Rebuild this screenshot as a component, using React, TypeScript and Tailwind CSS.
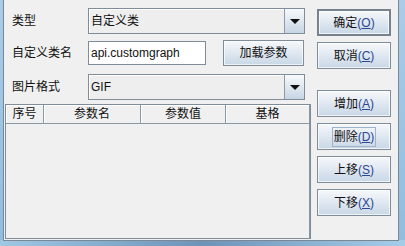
import React from "react";

const font = { fontFamily: '"Liberation Sans", "Noto Sans CJK SC", sans-serif' };

function Mn({ t, k }: { t: string; k: string }) {
  return (
    <span className="text-[#111]">
      {t}
      <span className="text-[#2a4792]">
        (<span className="underline underline-offset-1">{k}</span>)
      </span>
    </span>
  );
}

function Btn({ children, cls, focus }: { children: React.ReactNode; cls: string; focus?: boolean }) {
  return (
    <div
      className={`h-[27px] w-[74px] flex items-center justify-center border border-[#7f8c99] bg-linear-to-b from-[#f6f8fb] to-[#c9d7e6] shadow-[inset_0_0_0_1px_rgba(255,255,255,0.7)] text-[12px] ${cls}`}
    >
      {focus ? <span className="border border-[#9db3cb] px-[1px] leading-[18px]">{children}</span> : children}
    </div>
  );
}

function Combo({ text }: { text: string }) {
  return (
    <div className="w-[217px] h-[26px] flex border border-[#7f8c99] bg-[#eeeeee]">
      <div className="flex-1 flex items-center pl-[2px] text-[12px] text-[#111] shadow-[inset_1px_1px_0_#ffffff]">{text}</div>
      <div className="w-[20px] h-full border-l border-[#8d9aa7] bg-linear-to-b from-[#f8fafc] to-[#c6d5e4] flex items-center justify-center">
        <div className="w-0 h-0 border-l-[5px] border-r-[5px] border-t-[5px] border-l-transparent border-r-transparent border-t-[#111]" />
      </div>
    </div>
  );
}

export default function App() {
  return (
    <div className="w-[405px] h-[246px] bg-linear-to-b from-[#a9cce9] to-[#8fbde0] relative overflow-hidden" style={font}>
      <div className="absolute left-0 right-0 bottom-0 h-[6px] bg-linear-to-r from-[#9fc8e4] via-[#6f93b8] to-[#a6cde8]" />
      <div className="relative ml-[3px] w-[396px] h-[241px] bg-[#f0f0f0] border-l border-r border-b border-[#7b8794] flex">
        {/* left column */}
        <div className="ml-[1px] w-[306px] flex flex-col">
          <div className="mt-[8px] h-[26px] flex items-center">
            <div className="w-[83px] pl-[7px] text-[12px] text-[#111]">类型</div>
            <Combo text="自定义类" />
          </div>
          <div className="mt-[6px] h-[26px] flex items-center">
            <div className="w-[83px] pl-[7px] text-[12px] text-[#111]">自定义类名</div>
            <div className="w-[118px] h-[24px] border border-[#7f8c99] bg-white flex items-center pl-[2px] text-[12px] text-[#111]">
              api.customgraph
            </div>
            <div className="ml-[17px] w-[81px] h-[26px] flex items-center justify-center border border-[#7f8c99] bg-linear-to-b from-[#f6f8fb] to-[#c9d7e6] shadow-[inset_0_0_0_1px_rgba(255,255,255,0.7)] text-[12px] text-[#111]">
              加载参数
            </div>
          </div>
          <div className="mt-[8px] h-[26px] flex items-center">
            <div className="w-[83px] pl-[7px] text-[12px] text-[#111]">图片格式</div>
            <Combo text="GIF" />
          </div>
          <div className="mt-[4px] h-[135px] border border-[#7f8c99] flex flex-col bg-[#f0f0f0]">
            <div className="h-[19px] flex text-[12px] text-[#111] border-b border-[#8a97a4]">
              <div className="w-[38px] flex items-center justify-center border-r border-[#8a97a4] shadow-[inset_1px_1px_0_#ffffff]">序号</div>
              <div className="w-[97px] flex items-center justify-center border-r border-[#8a97a4] shadow-[inset_1px_1px_0_#ffffff]">参数名</div>
              <div className="w-[85px] flex items-center justify-center border-r border-[#8a97a4] shadow-[inset_1px_1px_0_#ffffff]">参数值</div>
              <div className="flex-1 flex items-center justify-center border-r border-[#8a97a4] shadow-[inset_1px_1px_0_#ffffff]">基格</div>
            </div>
            <div className="flex-1 border-r border-[#8a97a4]" />
          </div>
        </div>
        {/* right column */}
        <div className="ml-[6px] flex flex-col">
          <Btn cls="mt-[9px] border-2 border-[#76838f]"><Mn t="确定" k="O" /></Btn>
          <Btn cls="mt-[6px]"><Mn t="取消" k="C" /></Btn>
          <Btn cls="mt-[21px]"><Mn t="增加" k="A" /></Btn>
          <Btn cls="mt-[6px]" focus><Mn t="删除" k="D" /></Btn>
          <Btn cls="mt-[6px]"><Mn t="上移" k="S" /></Btn>
          <Btn cls="mt-[6px]"><Mn t="下移" k="X" /></Btn>
        </div>
      </div>
    </div>
  );
}
